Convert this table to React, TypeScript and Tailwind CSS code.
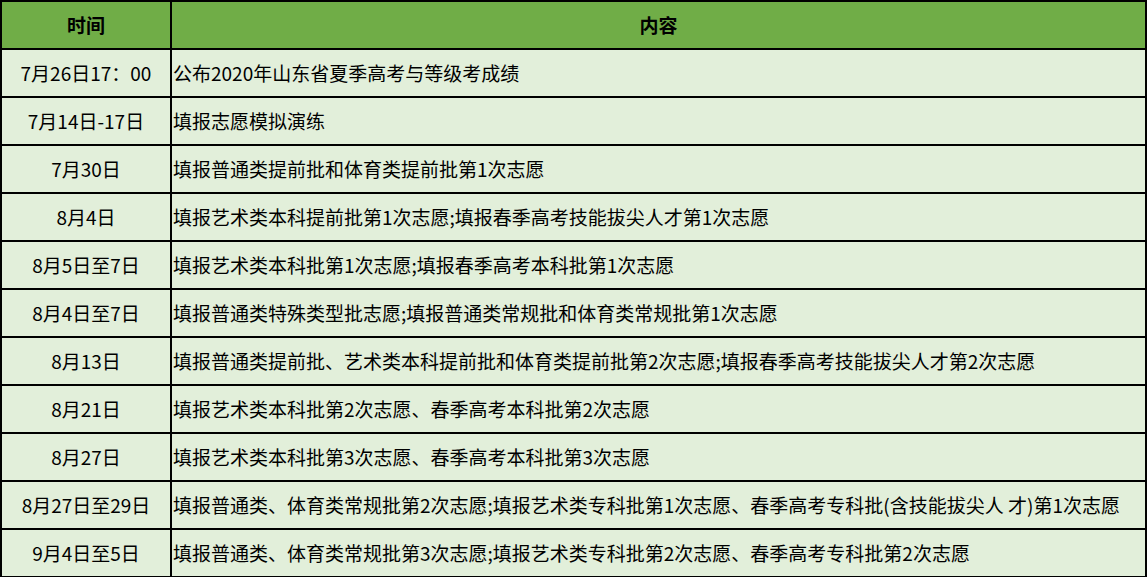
const rows: [string, string][] = [
  ['7月26日17：00', '公布2020年山东省夏季高考与等级考成绩'],
  ['7月14日-17日', '填报志愿模拟演练'],
  ['7月30日', '填报普通类提前批和体育类提前批第1次志愿'],
  ['8月4日', '填报艺术类本科提前批第1次志愿;填报春季高考技能拔尖人才第1次志愿'],
  ['8月5日至7日', '填报艺术类本科批第1次志愿;填报春季高考本科批第1次志愿'],
  ['8月4日至7日', '填报普通类特殊类型批志愿;填报普通类常规批和体育类常规批第1次志愿'],
  ['8月13日', '填报普通类提前批、艺术类本科提前批和体育类提前批第2次志愿;填报春季高考技能拔尖人才第2次志愿'],
  ['8月21日', '填报艺术类本科批第2次志愿、春季高考本科批第2次志愿'],
  ['8月27日', '填报艺术类本科批第3次志愿、春季高考本科批第3次志愿'],
  ['8月27日至29日', '填报普通类、体育类常规批第2次志愿;填报艺术类专科批第1次志愿、春季高考专科批(含技能拔尖人 才)第1次志愿'],
  ['9月4日至5日', '填报普通类、体育类常规批第3次志愿;填报艺术类专科批第2次志愿、春季高考专科批第2次志愿'],
];

export default function App() {
  return (
    <div
      className="w-[1147px] h-[577px] bg-white text-black"
      style={{ fontFamily: '"Noto Sans CJK SC", "Liberation Sans", sans-serif' }}
    >
      <table className="w-[1147px] border-collapse table-fixed text-[19px]">
        <colgroup>
          <col className="w-[170px]" />
          <col />
        </colgroup>
        <thead>
          <tr className="h-[48px] bg-[#70ad47]">
            <th className="border-2 border-black font-bold text-center">时间</th>
            <th className="border-2 border-black font-bold text-center">内容</th>
          </tr>
        </thead>
        <tbody>
          {rows.map(([time, content], i) => (
            <tr key={i} className="h-[48px] bg-[#e2efda]">
              <td className="border-2 border-black text-center whitespace-nowrap">{time}</td>
              <td className="border-2 border-black pl-[1px] whitespace-nowrap">{content}</td>
            </tr>
          ))}
        </tbody>
      </table>
    </div>
  );
}
